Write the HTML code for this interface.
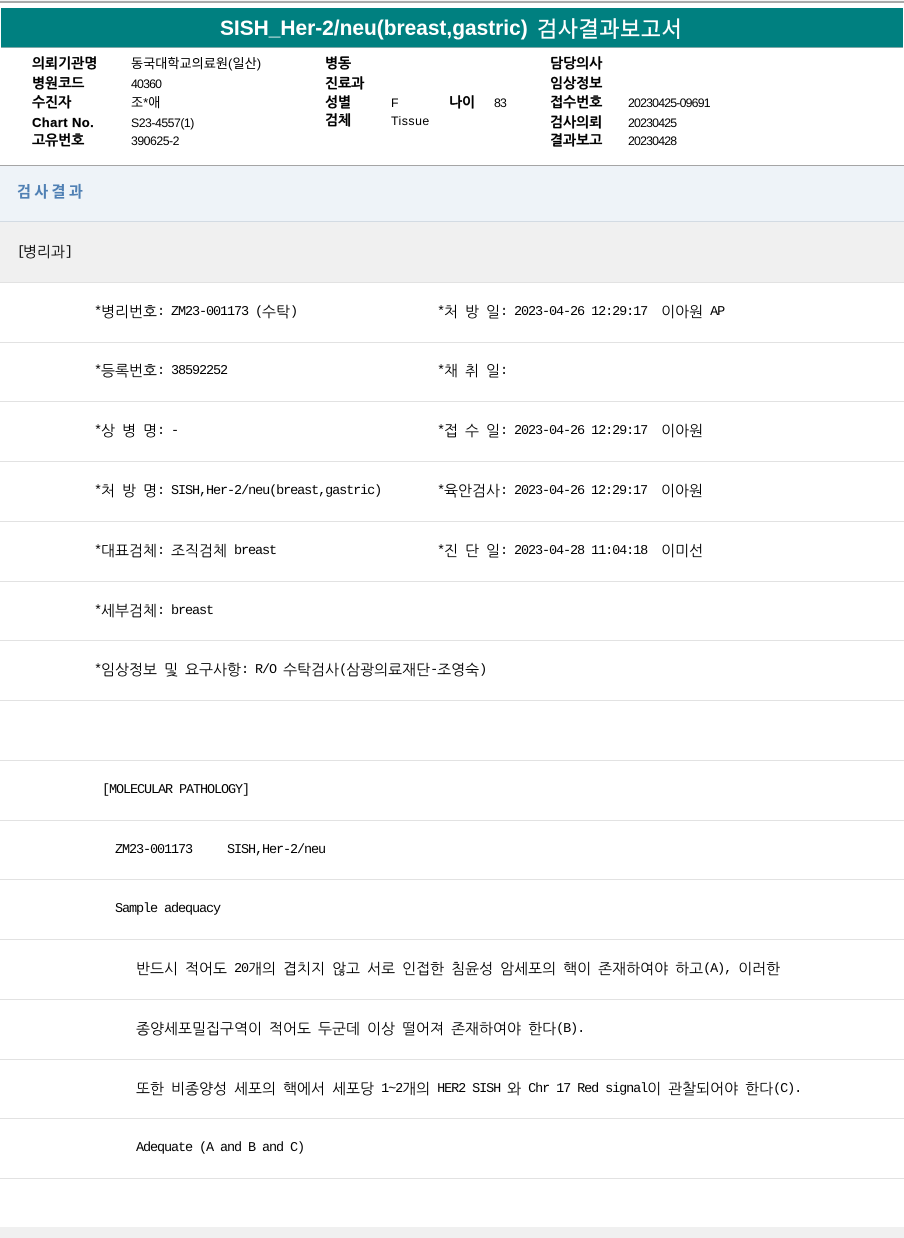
<!DOCTYPE html>
<html lang="ko"><head><meta charset="utf-8"><title>SISH</title>
<style>
html,body{margin:0;padding:0;background:#fff}
#p{position:relative;width:904px;height:1238px;overflow:hidden;background:#fff;color:#000}
#p div{position:absolute}
.l{left:0;width:904px;height:1px;background:#e2e2e2}
.r{white-space:pre;font:13.5px/20px "Liberation Mono","WenQuanYi Zen Hei",monospace;letter-spacing:-1.1px;height:20px;margin-top:1px;text-rendering:geometricPrecision}
.r i{font:normal 14.9px/20px "WenQuanYi Zen Hei","NanumGothic",sans-serif;letter-spacing:0;display:inline-block;vertical-align:top}
.t{white-space:pre;font:13.2px/16px "WenQuanYi Zen Hei","Liberation Sans",sans-serif;height:16px}
.n{white-space:pre;font:12.3px/16px "Liberation Sans",sans-serif;letter-spacing:-.8px;height:16px;text-rendering:geometricPrecision}
.b{font-weight:bold;-webkit-text-stroke:.2px #000;font-family:"WenQuanYi Zen Hei","NanumGothic",sans-serif;font-size:13.9px;white-space:pre;line-height:16px;height:16px}
</style></head><body><div id="p">
<div style="left:0;top:0;width:904px;height:1px;background:#f4f4f4"></div>
<div style="left:0;top:1px;width:904px;height:2px;background:#a9a9a9"></div>
<div style="left:1px;top:8px;width:902px;height:39px;background:#008080;border-bottom:1px solid #7fa9a9"></div>
<div style="left:220px;top:9px;height:38px;color:#fff;white-space:pre;font:bold 20.9px/40px 'Liberation Sans',sans-serif">SISH_Her-2/neu(breast,gastric)</div>
<div style="left:537px;top:8px;height:38px;color:#fff;white-space:pre;font:normal 22px/40px 'Noto Sans CJK KR',sans-serif;letter-spacing:.5px;-webkit-text-stroke:.25px #fff">검사결과보고서</div>

<div class="b" style="left:32px;top:56px">의뢰기관명</div>
<div class="b" style="left:32px;top:76px">병원코드</div>
<div class="b" style="left:32px;top:95px">수진자</div>
<div class="b" style="left:32px;top:115px;font-family:'Liberation Sans',sans-serif;font-size:13px;letter-spacing:.4px">Chart No.</div>
<div class="b" style="left:32px;top:133px">고유번호</div>
<div class="t" style="left:131px;top:56px">동국대학교의료원(일산)</div>
<div class="n" style="left:131px;top:76px">40360</div>
<div class="t" style="left:131px;top:95px">조*애</div>
<div class="n" style="left:131px;top:115px;letter-spacing:-.5px">S23-4557(1)</div>
<div class="n" style="left:131px;top:133px;letter-spacing:-.5px">390625-2</div>

<div class="b" style="left:325px;top:56px">병동</div>
<div class="b" style="left:325px;top:76px">진료과</div>
<div class="b" style="left:325px;top:95px">성별</div>
<div class="b" style="left:325px;top:113px">검체</div>
<div class="n" style="left:391px;top:95px">F</div>
<div class="n" style="left:391px;top:113px;letter-spacing:.5px">Tissue</div>
<div class="b" style="left:449px;top:95px">나이</div>
<div class="n" style="left:494px;top:95px">83</div>

<div class="b" style="left:550px;top:56px">담당의사</div>
<div class="b" style="left:550px;top:76px">임상정보</div>
<div class="b" style="left:550px;top:95px">접수번호</div>
<div class="b" style="left:550px;top:115px">검사의뢰</div>
<div class="b" style="left:550px;top:133px">결과보고</div>
<div class="n" style="left:628px;top:95px">20230425-09691</div>
<div class="n" style="left:628px;top:115px">20230425</div>
<div class="n" style="left:628px;top:133px">20230428</div>

<div style="left:0;top:165px;width:904px;height:1px;background:#a5a5a5"></div>
<div style="left:0;top:166px;width:904px;height:55px;background:#eef3f8"></div>
<div style="left:0;top:221px;width:904px;height:1px;background:#d3dbe3"></div>
<div style="left:17px;top:181px;white-space:pre;color:#5080b4;font:bold 15.2px/20px 'WenQuanYi Zen Hei','Noto Sans CJK KR',sans-serif;letter-spacing:3.3px">검사결과</div>
<div style="left:0;top:222px;width:904px;height:60px;background:#f0f0f0"></div>
<div class="r" style="left:17px;top:242px;letter-spacing:-2.2px">[<i>병리과</i>]</div>

<div class="l" style="top:282px"></div><div class="l" style="top:342px"></div><div class="l" style="top:401px"></div><div class="l" style="top:461px"></div><div class="l" style="top:521px"></div><div class="l" style="top:581px"></div><div class="l" style="top:640px"></div><div class="l" style="top:700px"></div><div class="l" style="top:760px"></div><div class="l" style="top:820px"></div><div class="l" style="top:879px"></div><div class="l" style="top:939px"></div><div class="l" style="top:999px"></div><div class="l" style="top:1059px"></div><div class="l" style="top:1118px"></div><div class="l" style="top:1178px"></div>

<div class="r" style="left:94px;top:302px">*<i>병리번호</i>: ZM23-001173 (<i>수탁</i>)</div>
<div class="r" style="left:94px;top:361px">*<i>등록번호</i>: 38592252</div>
<div class="r" style="left:94px;top:421px">*<i>상</i> <i>병</i> <i>명</i>: -</div>
<div class="r" style="left:94px;top:481px">*<i>처</i> <i>방</i> <i>명</i>: SISH,Her-2/neu(breast,gastric)</div>
<div class="r" style="left:94px;top:541px">*<i>대표검체</i>: <i>조직검체</i> breast</div>
<div class="r" style="left:94px;top:601px">*<i>세부검체</i>: breast</div>
<div class="r" style="left:94px;top:660px">*<i>임상정보</i> <i>및</i> <i>요구사항</i>: R/O <i>수탁검사</i>(<i>삼광의료재단</i>-<i>조영숙</i>)</div>

<div class="r" style="left:437px;top:302px">*<i>처</i> <i>방</i> <i>일</i>: 2023-04-26 12:29:17  <i>이아원</i> AP</div>
<div class="r" style="left:437px;top:361px">*<i>채</i> <i>취</i> <i>일</i>:</div>
<div class="r" style="left:437px;top:421px">*<i>접</i> <i>수</i> <i>일</i>: 2023-04-26 12:29:17  <i>이아원</i></div>
<div class="r" style="left:437px;top:481px">*<i>육안검사</i>: 2023-04-26 12:29:17  <i>이아원</i></div>
<div class="r" style="left:437px;top:541px">*<i>진</i> <i>단</i> <i>일</i>: 2023-04-28 11:04:18  <i>이미선</i></div>

<div class="r" style="left:102px;top:780px">[MOLECULAR PATHOLOGY]</div>
<div class="r" style="left:115px;top:840px">ZM23-001173     SISH,Her-2/neu</div>
<div class="r" style="left:115px;top:899px">Sample adequacy</div>
<div class="r" style="left:136px;top:959px"><i>반드시</i> <i>적어도</i> 20<i>개의</i> <i>겹치지</i> <i>않고</i> <i>서로</i> <i>인접한</i> <i>침윤성</i> <i>암세포의</i> <i>핵이</i> <i>존재하여야</i> <i>하고</i>(A), <i>이러한</i></div>
<div class="r" style="left:136px;top:1019px"><i>종양세포밀집구역이</i> <i>적어도</i> <i>두군데</i> <i>이상</i> <i>떨어져</i> <i>존재하여야</i> <i>한다</i>(B).</div>
<div class="r" style="left:136px;top:1079px"><i>또한</i> <i>비종양성</i> <i>세포의</i> <i>핵에서</i> <i>세포당</i> 1~2<i>개의</i> HER2 SISH <i>와</i> Chr 17 Red signal<i>이</i> <i>관찰되어야</i> <i>한다</i>(C).</div>
<div class="r" style="left:136px;top:1138px">Adequate (A and B and C)</div>

<div style="left:0;top:1227px;width:904px;height:11px;background:#f0f0f0"></div>
</div></body></html>
